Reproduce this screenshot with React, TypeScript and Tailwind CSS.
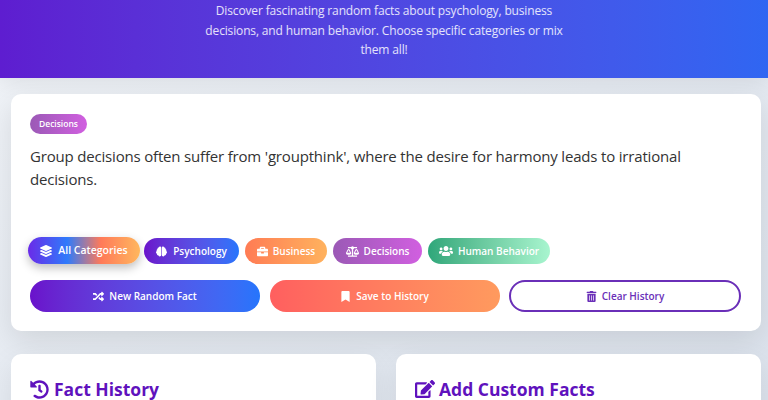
import { FaLayerGroup, FaBrain, FaBriefcase, FaBalanceScale, FaUsers, FaRandom, FaBookmark, FaTrashAlt, FaHistory, FaEdit } from "react-icons/fa"

const font = "font-['Open_Sans','Noto_Sans',sans-serif]"

export default function App() {
  return (
    <div className={`${font} h-[400px] w-[768px] overflow-hidden bg-gradient-to-br from-[#f1f4f8] to-[#dbe2ec]`}>
      <header className="h-[78px] bg-gradient-to-r from-[#5e1dd0] to-[#2f66f2] pt-[1px] text-center shadow-[0_4px_20px_rgba(0,0,0,0.08)]">
        <p className="mx-auto w-[380px] text-[12px] leading-[19.5px] tracking-[-0.15px] text-white/85">
          Discover fascinating random facts about psychology, business decisions, and human behavior. Choose specific categories or mix them all!
        </p>
      </header>

      <main className="pl-[11px] pr-[7px] pt-4">
        <section className="h-[237px] rounded-[10px] bg-white px-[19px] pt-5 shadow-[0_10px_30px_rgba(0,0,0,0.1)]">
          <span className="flex h-5 w-[57px] items-center justify-center rounded-full bg-gradient-to-r from-[#9b59b6] to-[#d15fe0] text-[8.5px] font-semibold text-white">
            Decisions
          </span>
          <p className="mt-[11px] h-[92px] text-[15px] leading-[23px] tracking-[-0.18px] text-[#333]">
            Group decisions often suffer from 'groupthink', where the desire for harmony leads to irrational decisions.
          </p>

          <div className="flex items-center gap-[5px]">
            <button className="-ml-[2px] flex h-[27px] w-[112px] items-center justify-center gap-[6px] rounded-full bg-[linear-gradient(90deg,#6a2be8,#2f7bfb_35%,#ff7a59_65%,#ffb75e)] pt-[1px] text-[10.5px] font-semibold text-white shadow-[0_4px_10px_rgba(0,0,0,0.25)]">
              <FaLayerGroup className="text-[12px]" />
              All Categories
            </button>
            <button className="-ml-[1px] flex h-[26px] w-[95px] items-center justify-center gap-[6px] rounded-full bg-gradient-to-r from-[#6a11cb] to-[#2575fc] pt-[1px] text-[10px] font-semibold text-white">
              <FaBrain className="text-[11px]" />
              Psychology
            </button>
            <button className="ml-[1px] flex h-[26px] w-[82px] items-center justify-center gap-[5px] rounded-full bg-gradient-to-r from-[#ff7b54] to-[#ffb25e] pt-[1px] text-[10px] font-semibold text-white">
              <FaBriefcase className="text-[11px]" />
              Business
            </button>
            <button className="ml-[1px] flex h-[26px] w-[89px] items-center justify-center gap-[5px] rounded-full bg-gradient-to-r from-[#9b59b6] to-[#d15fe0] pt-[1px] text-[10px] font-semibold text-white">
              <FaBalanceScale className="text-[13px]" />
              Decisions
            </button>
            <button className="ml-[1px] flex h-[26px] w-[122px] items-center justify-center gap-[5px] rounded-full bg-gradient-to-r from-[#2ea77a] to-[#a8f5cf] pt-[1px] text-[10px] font-semibold text-white">
              <FaUsers className="text-[14px]" />
              Human Behavior
            </button>
          </div>

          <div className="mt-4 grid grid-cols-[230px_230px_232px] gap-[9.5px]">
            <button className="flex h-8 items-center justify-center gap-[5px] rounded-full bg-gradient-to-r from-[#6a11cb] to-[#2575fc] text-[10px] font-semibold text-white">
              <FaRandom className="text-[11px]" />
              New Random Fact
            </button>
            <button className="flex h-8 items-center justify-center gap-[5px] rounded-full bg-gradient-to-r from-[#ff5f5f] to-[#ff9a5e] text-[10px] font-semibold text-white">
              <FaBookmark className="text-[11px]" />
              Save to History
            </button>
            <button className="flex h-8 items-center justify-center gap-[5px] rounded-full border-2 border-[#6a2fb8] bg-white text-[10px] font-semibold text-[#6a2fb8]">
              <FaTrashAlt className="text-[11px]" />
              Clear History
            </button>
          </div>
        </section>

        <div className="mt-[23px] grid grid-cols-2 gap-5">
          <section className="h-[120px] rounded-[10px] bg-white px-[19px] pt-[23px] shadow-[0_10px_30px_rgba(0,0,0,0.08)]">
            <h2 className="flex items-center gap-[5px] text-[17.5px] font-bold leading-6 text-[#5f12bd]">
              <FaHistory className="text-[19px]" />
              Fact History
            </h2>
          </section>
          <section className="h-[120px] rounded-[10px] bg-white px-[19px] pt-[23px] shadow-[0_10px_30px_rgba(0,0,0,0.08)]">
            <h2 className="flex items-center gap-[4px] text-[17.5px] font-bold leading-6 text-[#5f12bd]">
              <FaEdit className="text-[20px]" />
              Add Custom Facts
            </h2>
          </section>
        </div>
      </main>
    </div>
  )
}
